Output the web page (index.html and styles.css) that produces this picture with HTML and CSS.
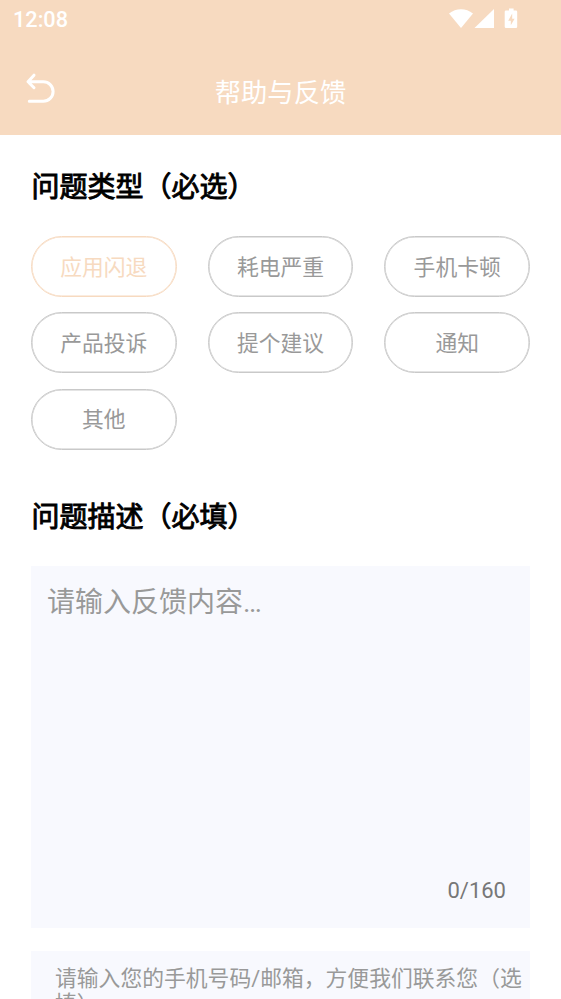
FILE: index.html
```html
<!DOCTYPE html>
<html lang="zh-CN">
<head>
<meta charset="utf-8">
<title>帮助与反馈</title>
<link rel="stylesheet" href="styles.css">
</head>
<body>
<header class="top">
  <div class="status">
    <span class="time">12:08</span>
    <svg class="status-icons" width="72" height="22" viewBox="0 0 72 22" fill="#fff">
      <path d="M0 4.500C7-1.300 17-1.300 24 4.500L12 19Z"/>
      <path d="M25.500 19L45 0V19Z"/>
      <path fill-rule="evenodd" d="M60-.5h4.600v2h2.300q1.300 0 1.300 1.300v14.900q0 1.300-1.300 1.300H57q-1.300 0-1.300-1.300V2.800q0-1.300 1.300-1.300h3ZM63.200 4.500L59.200 11.700H61.800V16.300L65.600 9.700H63.200Z"/>
    </svg>
  </div>
  <div class="nav">
    <svg class="back" width="32" height="34" viewBox="0 0 32 34" fill="none" stroke="#fff" stroke-width="3" stroke-linecap="round" stroke-linejoin="round">
      <path d="M10 3.200L4 9.700L10 15.700M4.300 9.700H19.300A9.800 9.800 0 0 1 19.300 29.300H5.300"/>
    </svg>
    <h1>帮助与反馈</h1>
  </div>
</header>
<main>
  <h2>问题类型（必选）</h2>
  <div class="types">
    <button class="type active">应用闪退</button>
    <button class="type">耗电严重</button>
    <button class="type">手机卡顿</button>
    <button class="type">产品投诉</button>
    <button class="type">提个建议</button>
    <button class="type">通知</button>
    <button class="type">其他</button>
  </div>
  <h2>问题描述（必填）</h2>
  <section class="description">
    <p>请输入反馈内容…</p>
    <span class="count">0/160</span>
  </section>
  <section class="contact">请输入您的手机号码/邮箱，方便我们联系您（选填）</section>
</main>
</body>
</html>
```
FILE: styles.css
```css
* { box-sizing: border-box; }
html, body { height: 100%; }
body {
  margin: 0;
  overflow: hidden;
  background: #fff;
  font-family: Roboto, "Noto Sans CJK SC", sans-serif;
}
h1, h2, p { margin: 0; font-size: inherit; }
.top { height: 135px; background: #f7dac0; color: #fff; }
.status {
  display: flex;
  justify-content: space-between;
  height: 48px;
  padding: 9px 40px 0 13px;
}
.time { font-size: 21.700px; line-height: 22px; font-weight: 500; }
.status-icons { display: block; overflow: visible; }
.nav {
  display: grid;
  grid-template-columns: 56px 1fr 56px;
  align-items: center;
  height: 87px;
}
.back { margin: -5px 0 0 24px; }
.nav h1 { padding-top: 2px; font-size: 26.300px; font-weight: 400; line-height: 40px; text-align: center; }
main { padding: 32px 31px 0; }
h2 {
  padding-left: .5px;
  font-size: 28px;
  line-height: 42px;
  font-weight: 400;
  color: #000;
  white-space: nowrap;
  -webkit-text-stroke: .9px #000;
}
.types {
  display: grid;
  grid-template-columns: repeat(3, 145.600px);
  justify-content: space-between;
  row-gap: 15.400px;
  margin: 27px 0 47px;
}
.type {
  height: 61px;
  padding: 0 0 3px;
  border: 1px solid #c9c9c9;
  border-radius: 31px;
  box-shadow: inset 0 0 0 .5px #c9c9c9;
  background: transparent;
  color: #999;
  font: 21.800px Roboto, "Noto Sans CJK SC", sans-serif;
}
.type.active { border-color: #f7dac0; box-shadow: inset 0 0 0 .5px #f7dac0; color: #f7dac0; }
.description {
  display: flex;
  flex-direction: column;
  justify-content: space-between;
  height: 362px;
  margin-top: 27px;
  padding: 17px 24px 22px 16px;
  background: #f8f9fe;
  color: #999;
}
.description p { font-size: 28px; line-height: 40px; }
.count { align-self: flex-end; font-size: 22px; line-height: 30px; color: #777; }
.contact {
  height: 90px;
  margin-top: 23px;
  padding: 15px 0 0 24px;
  background: #f8f9fe;
  color: #999;
  font-size: 21.800px;
  line-height: 25.500px;
}
```
